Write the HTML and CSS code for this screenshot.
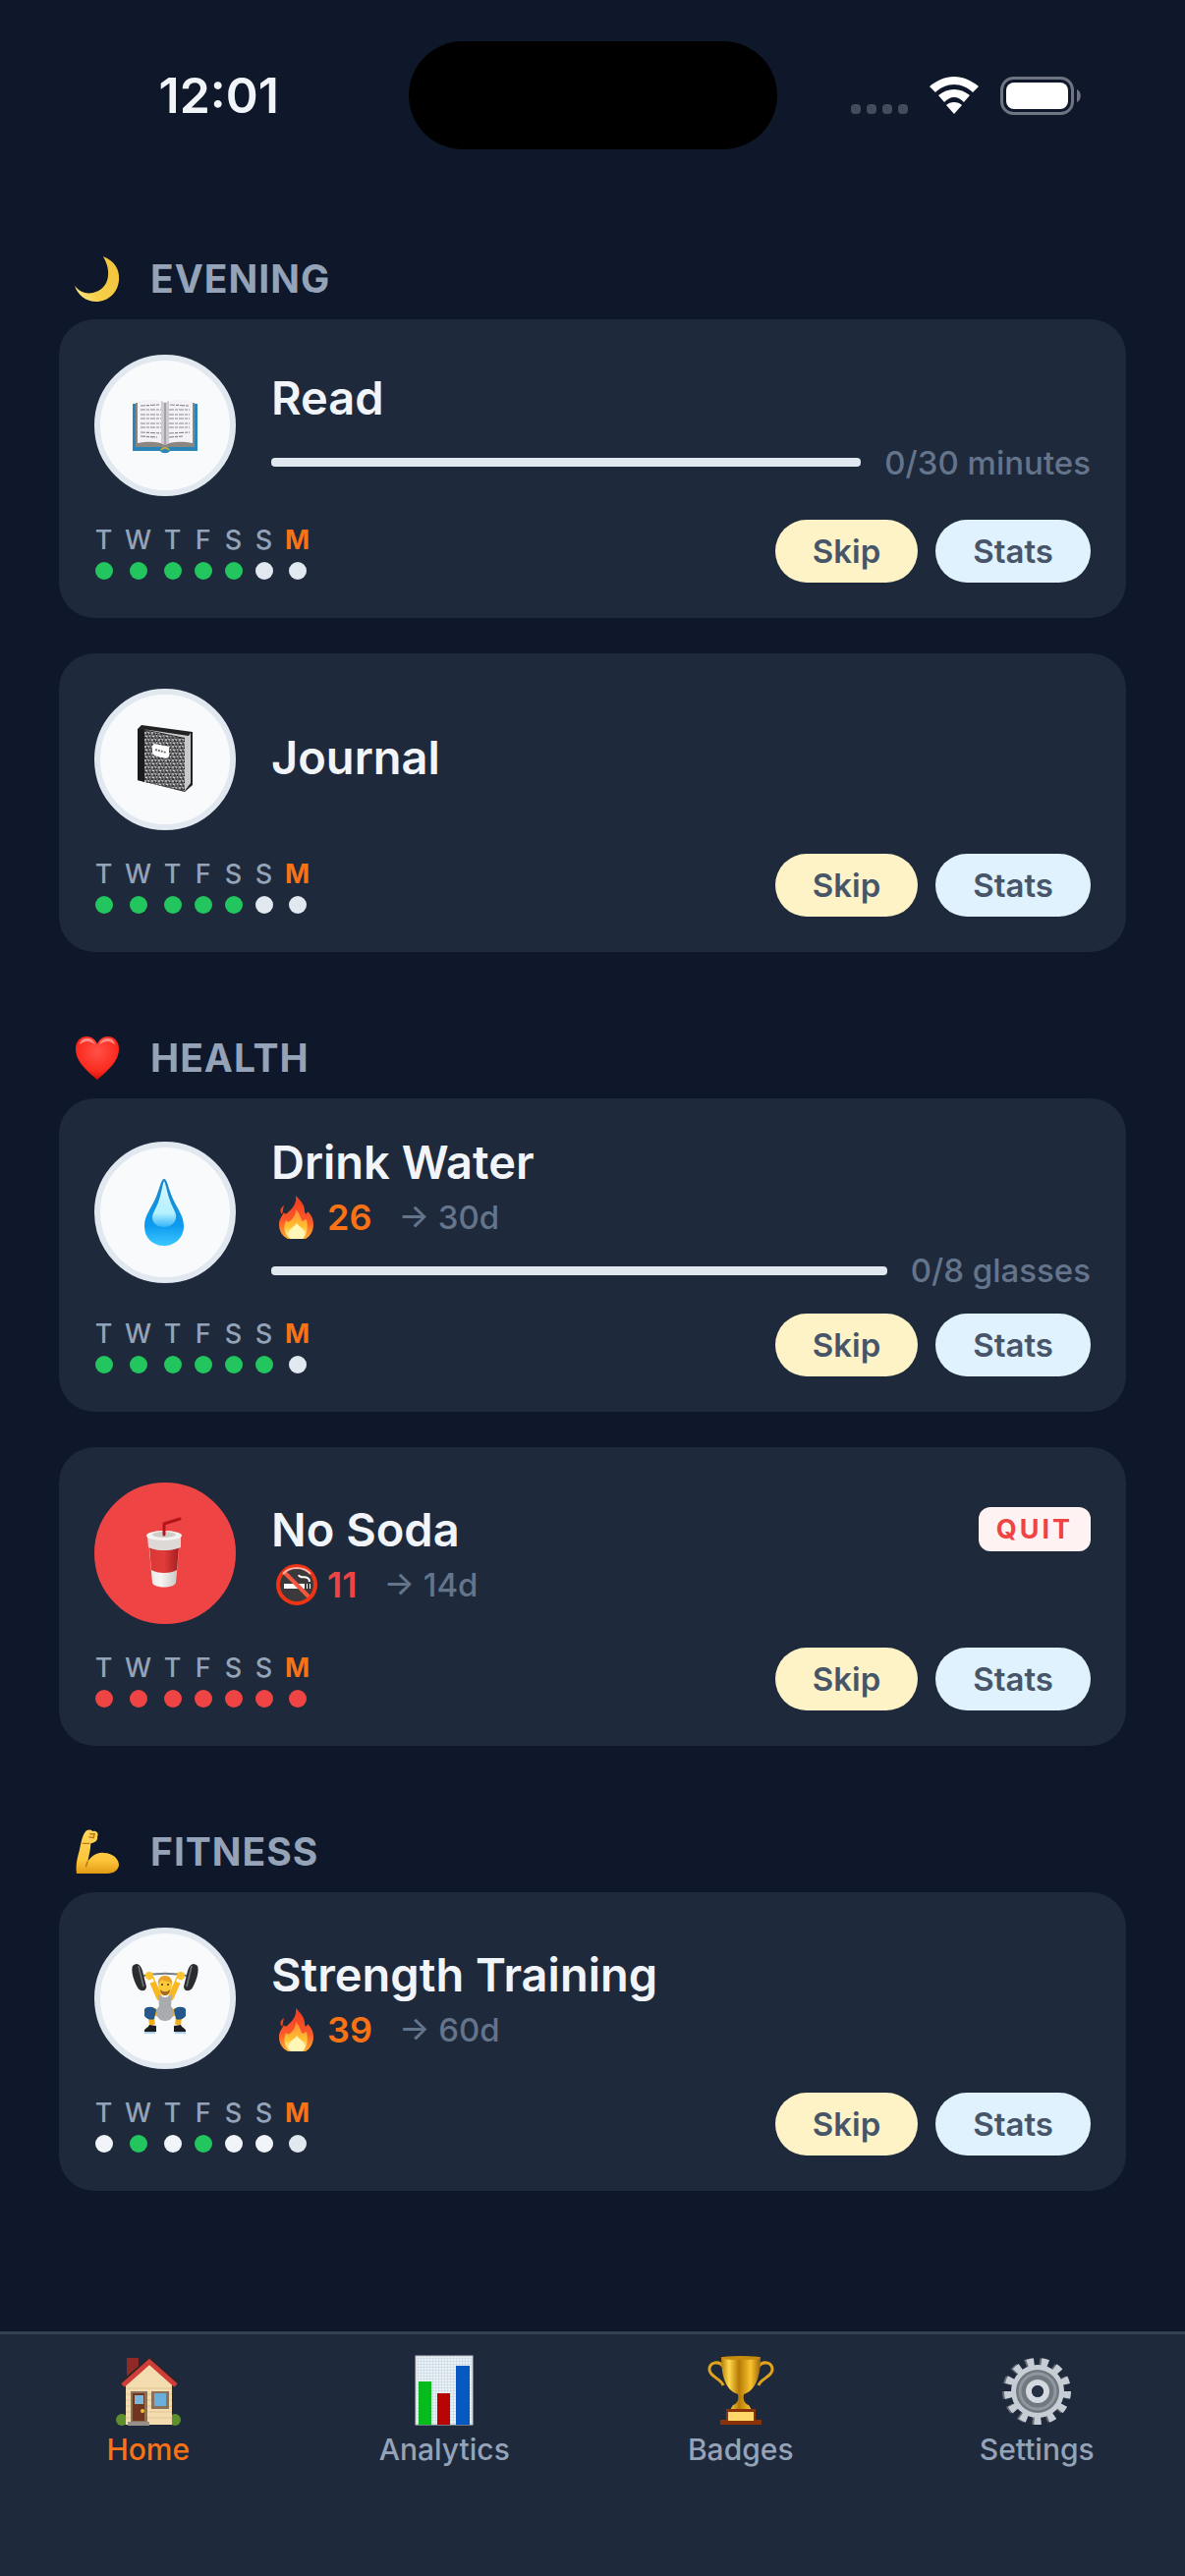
FILE: index.html
```html
<!DOCTYPE html>
<html lang="en">
<head>
  <meta charset="UTF-8">
  <meta name="viewport" content="width=device-width, initial-scale=1.0">
  <title>Habits</title>
  <link rel="stylesheet" href="styles.css">
</head>
<body>

<!-- shared icons -->
<svg class="defs" width="0" height="0" aria-hidden="true">
  <defs>
    <linearGradient id="fireOuter" x1="0" y1="0" x2="0" y2="1">
      <stop offset="0" stop-color="#f0381f"/>
      <stop offset="0.6" stop-color="#fb5a2a"/>
      <stop offset="1" stop-color="#ffb02e"/>
    </linearGradient>
    <linearGradient id="fireInner" x1="0" y1="0" x2="0" y2="1">
      <stop offset="0" stop-color="#ff8a3c"/>
      <stop offset="0.6" stop-color="#ffc22e"/>
      <stop offset="1" stop-color="#fffbd0"/>
    </linearGradient>
    <symbol id="fire" viewBox="0 0 48 44">
      <path fill="url(#fireOuter)" d="M25 0 C29 4 34 9 34 15 C34 18 35 19 36 18 C37 17 37 16 38 17 C41 20 43 24 43 29 C43 36 40 41 35 44 H17 C11 41 8 36 8 29 C8 24 11 21 13 17 C14 19 15 19 17 17 C22 13 26 8 25 0 Z"/>
      <path fill="#f0481f" d="M13 10 C10 12 8 15 11 19 C12 16 12 13 13 10 Z"/>
      <path fill="url(#fireInner)" d="M25 14 C30 19 30 25 32 26 C34 25 35 24 36 24 C38 33 36 40 32 44 H20 C13 40 12 32 15 25 C17 27 18 27 19 26 C23 23 25 19 25 14 Z"/>
      <path fill="#fff6b8" d="M26 28 C28 32 34 33 34 38 C34 41 32 43 31 44 H21 C19 42 18 40 18 38 C18 33 24 32 26 28 Z"/>
    </symbol>
  </defs>
</svg>

<header class="status-bar">
  <div class="time">12:01</div>
  <div class="island"></div>
  <div class="status-icons">
    <div class="signal"><i></i><i></i><i></i><i></i></div>
    <svg class="wifi" viewBox="0 0 50 38">
      <g fill="#fff">
        <path d="M25 0 C34 0 43 4 50 10 L44 16 C39 11 32 8 25 8 C18 8 11 11 6 16 L0 10 C7 4 16 0 25 0 Z"/>
        <path d="M25 13 C31 13 36 15 41 19 L35 26 C32 23 29 21 25 21 C21 21 18 23 15 26 L9 19 C14 15 19 13 25 13 Z"/>
        <path d="M25 26 C28 26 31 27 33 29 L25 38 L17 29 C19 27 22 26 25 26 Z"/>
      </g>
    </svg>
    <svg class="battery" viewBox="0 0 82 39">
      <rect x="1.5" y="1.5" width="72" height="36" rx="12" fill="none" stroke="#6f7482" stroke-width="3"/>
      <rect x="6" y="6" width="63" height="27" rx="8" fill="#fff"/>
      <path d="M78 13 C83 15 83 24 78 26 Z" fill="#6f7482"/>
    </svg>
  </div>
</header>

<main>
  <section>
    <h2>
      <svg class="section-icon" viewBox="0 0 48 48">
        <defs>
          <linearGradient id="moon" x1="1" y1="0" x2="0" y2="1">
            <stop offset="0" stop-color="#f0c23a"/>
            <stop offset="0.7" stop-color="#f7cf49"/>
            <stop offset="1" stop-color="#fff09a"/>
          </linearGradient>
        </defs>
        <path fill="url(#moon)" d="M30 0 C42 4 48 14 47 25 C46 38 36 48 23 48 C12 48 3 41 0 31 C6 39 15 41 24 37 C36 32 40 16 30 0 Z"/>
      </svg>
      <span>EVENING</span>
    </h2>

    <article class="card">
      <div class="card-top">
        <div class="habit-icon">
          <svg viewBox="0 0 84 84">
            <path fill="#2a86b8" d="M9 20 H75 V68 H47 C45 71 39 71 37 68 H9 Z"/>
            <path fill="#8b8780" d="M12 19 H72 V64 H12 Z"/>
            <path fill="#f4f2f6" d="M14 18 C24 15 36 15 42 19 C48 15 60 15 70 18 V60 C60 58 48 58 42 62 C36 58 24 58 14 60 Z"/>
            <path fill="#cfcbd2" d="M38 17 L42 19 L46 17 V60 L42 62 L38 60 Z"/>
            <path stroke="#777" stroke-width="1" d="M42 19 V62"/>
            <path stroke="#86868c" stroke-width="1.2" stroke-dasharray="5 1 3 1" d="M17 22 L36 21 M17 26 L38 26 M17 31 L38 31 M17 35 L38 35 M17 40 L38 40 M17 44 L38 44 M17 49 L38 50 M17 53 L34 54 M47 21 L66 22 M46 26 L67 26 M46 31 L67 31 M46 35 L67 35 M46 40 L67 40 M46 44 L67 44 M46 50 L67 49 M46 54 L60 53"/>
            <path fill="none" stroke="#c8a640" stroke-width="2" d="M38 67 C40 64 44 64 46 67"/>
          </svg>
        </div>
        <div class="info">
          <div class="title-row"><h3>Read</h3></div>
          <div class="progress"><div class="track"></div><span>0/30 minutes</span></div>
        </div>
      </div>
      <div class="card-bottom">
        <div class="week">
          <div class="day"><span>T</span><i class="done"></i></div>
          <div class="day"><span>W</span><i class="done"></i></div>
          <div class="day"><span>T</span><i class="done"></i></div>
          <div class="day"><span>F</span><i class="done"></i></div>
          <div class="day"><span>S</span><i class="done"></i></div>
          <div class="day"><span>S</span><i></i></div>
          <div class="day today"><span>M</span><i></i></div>
        </div>
        <div class="actions">
          <button class="skip">Skip</button>
          <button class="stats">Stats</button>
        </div>
      </div>
    </article>

    <article class="card">
      <div class="card-top">
        <div class="habit-icon">
          <svg viewBox="0 0 84 84">
            <defs>
              <pattern id="speckle" width="7" height="7" patternUnits="userSpaceOnUse">
                <rect width="7" height="7" fill="#66666b"/>
                <path stroke="#f0f0f0" stroke-width="1" d="M0 1 h2 M4 0 v2 M1 4 l2 1 M5 4 h1 M3 6 h1"/>
                <path stroke="#111" stroke-width="1" d="M2 2 h2 M5 2 l1 1 M0 6 h2 M4 5 v2"/>
              </pattern>
            </defs>
            <path fill="#222" d="M18 7 L70 14 V68 L62 75 L14 63 V11 Z"/>
            <path fill="#c9c9c9" d="M19 11 L66 18 L68 15 L68 66 L62 74 V20 Z"/>
            <path fill="url(#speckle)" d="M21 12 L62 21 V74 L21 65 Z"/>
            <path fill="#1b1b1d" d="M14 11 L21 12 V65 L14 63 Z"/>
            <path fill="#fff" d="M31 26 L46 29 V39 L43 41 L31 38 L29 35 V28 Z"/>
            <path stroke="#777" stroke-width="2" stroke-dasharray="2 1" d="M32 32 L43 35"/>
          </svg>
        </div>
        <div class="info">
          <div class="title-row"><h3>Journal</h3></div>
        </div>
      </div>
      <div class="card-bottom">
        <div class="week">
          <div class="day"><span>T</span><i class="done"></i></div>
          <div class="day"><span>W</span><i class="done"></i></div>
          <div class="day"><span>T</span><i class="done"></i></div>
          <div class="day"><span>F</span><i class="done"></i></div>
          <div class="day"><span>S</span><i class="done"></i></div>
          <div class="day"><span>S</span><i></i></div>
          <div class="day today"><span>M</span><i></i></div>
        </div>
        <div class="actions">
          <button class="skip">Skip</button>
          <button class="stats">Stats</button>
        </div>
      </div>
    </article>
  </section>

  <section>
    <h2>
      <svg class="section-icon" viewBox="0 0 48 48">
        <defs>
          <radialGradient id="heart" cx="0.5" cy="0.35" r="0.65">
            <stop offset="0" stop-color="#ff5148"/>
            <stop offset="0.7" stop-color="#fb2b20"/>
            <stop offset="1" stop-color="#d10d05"/>
          </radialGradient>
        </defs>
        <path fill="url(#heart)" d="M24 47 C14 38 1 28 1 14 C1 6 6 1 13 1 C18 1 22 4 24 9 C26 4 30 1 35 1 C42 1 47 6 47 14 C47 28 34 38 24 47 Z"/>
        <path fill="#ffb3ac" opacity="0.7" d="M5 10 C6 5 9 3 13 3 C17 3 20 5 22 10 C17 5 10 5 5 10 Z M26 10 C28 5 31 3 35 3 C39 3 42 5 43 10 C38 5 31 5 26 10 Z"/>
      </svg>
      <span>HEALTH</span>
    </h2>

    <article class="card">
      <div class="card-top">
        <div class="habit-icon">
          <svg viewBox="0 0 84 84">
            <defs>
              <linearGradient id="drop" x1="0" y1="0" x2="0" y2="1">
                <stop offset="0" stop-color="#1b86c8"/>
                <stop offset="0.7" stop-color="#0d9bf0"/>
                <stop offset="1" stop-color="#3cc8ff"/>
              </linearGradient>
              <linearGradient id="dropShine" x1="0" y1="0" x2="0" y2="1">
                <stop offset="0" stop-color="#d8f8ff"/>
                <stop offset="0.7" stop-color="#b4f0ff"/>
                <stop offset="1" stop-color="#35b4f8"/>
              </linearGradient>
            </defs>
            <path fill="url(#drop)" d="M41 8 C44 8 45 16 49 26 C54 38 61 45 61 56 C61 68 52 76 41 76 C29 76 21 68 21 56 C21 45 28 38 33 26 C37 16 38 8 41 8 Z"/>
            <path fill="url(#dropShine)" d="M41 10 C43 14 44 22 47 30 C50 39 54 42 53 48 C52 54 46 57 41 57 C35 57 30 54 29 48 C29 42 33 39 36 29 C39 20 39 14 41 10 Z"/>
          </svg>
        </div>
        <div class="info">
          <div class="title-row"><h3>Drink Water</h3></div>
          <div class="streak">
            <svg class="streak-icon"><use href="#fire"/></svg>
            <b>26</b>
            <span>→ 30d</span>
          </div>
          <div class="progress"><div class="track"></div><span>0/8 glasses</span></div>
        </div>
      </div>
      <div class="card-bottom">
        <div class="week">
          <div class="day"><span>T</span><i class="done"></i></div>
          <div class="day"><span>W</span><i class="done"></i></div>
          <div class="day"><span>T</span><i class="done"></i></div>
          <div class="day"><span>F</span><i class="done"></i></div>
          <div class="day"><span>S</span><i class="done"></i></div>
          <div class="day"><span>S</span><i class="done"></i></div>
          <div class="day today"><span>M</span><i></i></div>
        </div>
        <div class="actions">
          <button class="skip">Skip</button>
          <button class="stats">Stats</button>
        </div>
      </div>
    </article>

    <article class="card">
      <div class="card-top">
        <div class="habit-icon quit">
          <svg viewBox="0 0 84 84">
            <defs>
              <linearGradient id="cup" x1="0" y1="0" x2="1" y2="0">
                <stop offset="0" stop-color="#e9e7e5"/>
                <stop offset="0.4" stop-color="#f6f5f4"/>
                <stop offset="1" stop-color="#c4c1be"/>
              </linearGradient>
              <linearGradient id="sleeve" x1="0" y1="0" x2="1" y2="0">
                <stop offset="0" stop-color="#d93636"/>
                <stop offset="0.5" stop-color="#e03c3a"/>
                <stop offset="1" stop-color="#a51d1f"/>
              </linearGradient>
            </defs>
            <path fill="url(#cup)" d="M25 28 H57 L53 72 C51 78 31 78 29 72 Z"/>
            <path fill="url(#sleeve)" d="M26 36 C34 40 48 40 56 36 L54 59 C48 63 34 63 28 59 Z"/>
            <path fill="#dcd9d6" d="M24 24 H58 V36 C48 40 34 40 25 36 Z"/>
            <ellipse cx="41" cy="24" rx="18" ry="5" fill="#f4f2f0"/>
            <ellipse cx="41" cy="23" rx="12" ry="3" fill="#cfcbc8"/>
            <path fill="none" stroke="#b3151b" stroke-width="3" stroke-linecap="round" stroke-linejoin="round" d="M41 23 V12 L57 7"/>
          </svg>
        </div>
        <div class="info">
          <div class="title-row"><h3>No Soda</h3><div class="badge">QUIT</div></div>
          <div class="streak broken">
            <svg class="streak-icon" viewBox="0 0 48 44">
              <circle cx="26" cy="22" r="20" fill="#3a3a3c"/>
              <path fill="#fff" d="M13 21 H34 V26 H13 Z M36 21 h1 v5 h-1 Z M39 21 h1 v5 h-1 Z"/>
              <path fill="none" stroke="#fff" stroke-width="2" d="M28 12 C29 17 39 11 39 19"/>
              <path stroke="#f4573f" stroke-width="4" d="M13 9 L39 35"/>
              <circle cx="26" cy="22" r="19" fill="none" stroke="#ee3414" stroke-width="4"/>
              <path fill="none" stroke="#ffb0a0" stroke-width="2" d="M12 11 C19 3 33 3 40 11"/>
            </svg>
            <b>11</b>
            <span>→ 14d</span>
          </div>
        </div>
      </div>
      <div class="card-bottom">
        <div class="week">
          <div class="day"><span>T</span><i class="missed"></i></div>
          <div class="day"><span>W</span><i class="missed"></i></div>
          <div class="day"><span>T</span><i class="missed"></i></div>
          <div class="day"><span>F</span><i class="missed"></i></div>
          <div class="day"><span>S</span><i class="missed"></i></div>
          <div class="day"><span>S</span><i class="missed"></i></div>
          <div class="day today"><span>M</span><i class="missed"></i></div>
        </div>
        <div class="actions">
          <button class="skip">Skip</button>
          <button class="stats">Stats</button>
        </div>
      </div>
    </article>
  </section>

  <section>
    <h2>
      <svg class="section-icon" viewBox="0 0 48 48">
        <defs>
          <linearGradient id="arm" x1="0" y1="0" x2="0" y2="1">
            <stop offset="0" stop-color="#ffd65c"/>
            <stop offset="0.7" stop-color="#fdc53a"/>
            <stop offset="1" stop-color="#e09a14"/>
          </linearGradient>
        </defs>
        <path fill="url(#arm)" d="M11 3 C13 0 17 0 19 2 C23 1 26 4 24 8 C25 12 21 14 17 15 C17 22 15 27 14 34 C18 28 24 24 31 25 C41 25 47 32 47 38 C46 44 41 47 33 47 H2 C1 40 2 33 4 26 C6 20 7 8 11 3 Z"/>
        <path fill="none" stroke="#b97811" stroke-width="1.5" d="M16 5 L21 5 L20 9 L15 8 M8 15 L16 15 M14 34 C13 36 12 38 12 40"/>
      </svg>
      <span>FITNESS</span>
    </h2>

    <article class="card">
      <div class="card-top">
        <div class="habit-icon">
          <svg viewBox="0 0 84 84">
            <path fill="none" stroke="#777d84" stroke-width="2" d="M15 20 C32 16 52 16 69 20"/>
            <path fill="#2a2c30" d="M9 9 C13 5 17 7 19 14 L23 30 C23 35 17 36 14 31 C10 24 7 14 9 9 Z M75 9 C71 5 67 7 65 14 L61 30 C61 35 67 36 70 31 C74 24 77 14 75 9 Z"/>
            <path fill="none" stroke="#74777c" stroke-width="1.5" d="M15 9 L20 30 M69 9 L64 30"/>
            <path fill="none" stroke="#f9b81f" stroke-width="6" stroke-linecap="round" d="M27 20 L36 41 M57 20 L48 41"/>
            <circle cx="26" cy="19" r="4" fill="#fcc42c"/>
            <circle cx="58" cy="19" r="4" fill="#fcc42c"/>
            <path stroke="#fff" stroke-width="6" d="M27 23 L28 26 M57 23 L56 26"/>
            <path fill="none" stroke="#f4ae17" stroke-width="6" d="M27 54 L29 69 M57 54 L55 69"/>
            <path fill="none" stroke="#f4ae17" stroke-width="7" d="M27 54 L40 59 M57 54 L44 59"/>
            <path fill="#a9abaf" d="M35 38 C40 42 44 42 49 38 L48 50 C53 55 51 65 42 65 C33 65 31 55 36 50 Z"/>
            <ellipse cx="42" cy="29" rx="7" ry="10" fill="#fdca3c"/>
            <path fill="#e9a324" d="M35 28 C33 16 51 16 49 28 C46 23 42 26 39 23 C38 24 36 25 35 28 Z"/>
            <path fill="#a56a1c" d="M37 33 C40 36 44 36 47 33 C47 41 37 41 37 33 Z"/>
            <path fill="#26578c" d="M21 53 C24 49 32 51 33 54 L31 63 C28 65 23 63 21 60 Z M63 53 C60 49 52 51 51 54 L53 63 C56 65 61 63 63 60 Z"/>
            <path fill="#1c1d20" d="M26 69 L33 70 L33 76 H21 C20 73 25 72 26 69 Z M58 69 L51 70 L51 76 H63 C64 73 59 72 58 69 Z"/>
            <path stroke="#60a5e0" stroke-width="1" d="M21 77 H32 M52 77 H63"/>
            <path fill="none" stroke="#583513" stroke-width="1.5" d="M38 28 h2 M44 28 h2"/>
          </svg>
        </div>
        <div class="info">
          <div class="title-row"><h3>Strength Training</h3></div>
          <div class="streak">
            <svg class="streak-icon"><use href="#fire"/></svg>
            <b>39</b>
            <span>→ 60d</span>
          </div>
        </div>
      </div>
      <div class="card-bottom">
        <div class="week">
          <div class="day"><span>T</span><i class="off"></i></div>
          <div class="day"><span>W</span><i class="done"></i></div>
          <div class="day"><span>T</span><i class="off"></i></div>
          <div class="day"><span>F</span><i class="done"></i></div>
          <div class="day"><span>S</span><i class="off"></i></div>
          <div class="day"><span>S</span><i class="off"></i></div>
          <div class="day today"><span>M</span><i></i></div>
        </div>
        <div class="actions">
          <button class="skip">Skip</button>
          <button class="stats">Stats</button>
        </div>
      </div>
    </article>
  </section>
</main>

<nav class="tab-bar">
  <a href="#home" class="active">
    <svg viewBox="0 0 72 72">
      <path fill="#8f2a26" d="M14 3 H26 V16 L14 27 Z"/>
      <circle cx="9" cy="66" r="6" fill="#5d8f2e"/>
      <circle cx="63" cy="66" r="6" fill="#5d8f2e"/>
      <path fill="#f3dcb0" d="M13 30 L37 8 L60 30 V71 H13 Z"/>
      <path stroke="#dfc593" stroke-width="1" d="M13 34 H60 M13 40 H60 M13 46 H60 M13 52 H60 M13 58 H60 M13 64 H60"/>
      <path fill="none" stroke="#2b2527" stroke-width="3" d="M9 28 L37 4 L65 28"/>
      <path fill="none" stroke="#cf3d38" stroke-width="5" d="M10 31 L37 7 L64 31"/>
      <path fill="#8d7156" d="M18 37 H35 V68 H18 Z"/>
      <path fill="#6f351f" d="M20 39 H32 V67 H20 Z"/>
      <path fill="#79b8dc" d="M22 41 H31 V50 H22 Z"/>
      <circle cx="30" cy="57" r="2" fill="#f1bd38"/>
      <path fill="#8d7156" d="M39 37 H57 V55 H39 Z"/>
      <path fill="#6aaedb" d="M42 39 H54 V52 H42 Z"/>
      <path fill="#96908a" d="M15 68 H37 V72 H15 Z"/>
    </svg>
    <span>Home</span>
  </a>
  <a href="#analytics">
    <svg viewBox="0 0 72 72">
      <defs>
        <pattern id="grid" width="3" height="3" patternUnits="userSpaceOnUse">
          <rect width="3" height="3" fill="#eef1f3"/>
          <path stroke="#b9d3e4" stroke-width="1" fill="none" d="M0 0 H3 M0 0 V3"/>
        </pattern>
      </defs>
      <rect x="7" y="1" width="58" height="70" fill="url(#grid)" stroke="#c5c8cb" stroke-width="1"/>
      <rect x="10" y="27" width="13" height="44" fill="#06bb1b"/>
      <rect x="29" y="39" width="13" height="32" fill="#b90404"/>
      <rect x="48" y="11" width="14" height="60" fill="#0559c0"/>
    </svg>
    <span>Analytics</span>
  </a>
  <a href="#badges">
    <svg viewBox="0 0 72 72">
      <defs>
        <linearGradient id="gold" x1="0" y1="0" x2="1" y2="0">
          <stop offset="0" stop-color="#b87a08"/>
          <stop offset="0.2" stop-color="#ffd94d"/>
          <stop offset="0.45" stop-color="#b67a05"/>
          <stop offset="0.75" stop-color="#f8c22e"/>
          <stop offset="1" stop-color="#9b6706"/>
        </linearGradient>
      </defs>
      <path fill="none" stroke="#e0a41c" stroke-width="3" d="M19 13 C14 5 4 7 4 15 C4 22 16 24 18 31 M53 13 C58 5 68 7 68 15 C68 22 56 24 54 31"/>
      <path fill="url(#gold)" d="M16 2 H56 C56 20 52 36 39 40 C38 45 39 49 44 51 L47 56 H25 L28 51 C33 49 34 45 33 40 C20 36 16 20 16 2 Z"/>
      <ellipse cx="36" cy="3" rx="20" ry="2" fill="#c98c0d"/>
      <path fill="#8c3209" d="M21 55 H51 V66 H57 V71 H15 V66 H21 Z"/>
      <path fill="#ffd869" d="M23 58 H49 V67 H23 Z"/>
    </svg>
    <span>Badges</span>
  </a>
  <a href="#settings">
    <svg viewBox="0 0 72 72">
      <circle cx="35" cy="37" r="30" fill="none" stroke="#686b6e" stroke-width="8" stroke-dasharray="7 7.5"/>
      <circle cx="37" cy="37" r="30" fill="none" stroke="#c7cdd4" stroke-width="8" stroke-dasharray="7 7.5"/>
      <circle cx="37" cy="37" r="27" fill="#c7cdd4"/>
      <circle cx="37" cy="37" r="22" fill="#717980"/>
      <circle cx="37" cy="37" r="18" fill="none" stroke="#90989f" stroke-width="3"/>
      <circle cx="37" cy="37" r="9" fill="#3c444d" stroke="#d3d9df" stroke-width="6"/>
      <circle cx="37" cy="37" r="6" fill="#253044"/>
    </svg>
    <span>Settings</span>
  </a>
</nav>

</body>
</html>
```
FILE: styles.css
```css
* {
    box-sizing: border-box;
}
body {
    margin: 0;
    min-height: 100vh;
    display: flex;
    flex-direction: column;
    background-color: #0f172a;
    color: #f1f5f9;
    font-family: Inter, "Liberation Sans", sans-serif;
}
.defs {
    position: absolute;
}

/* status bar */
.status-bar {
    display: grid;
    grid-template-columns: 1fr 375px 1fr;
    align-items: center;
    padding: 42px 0 24px;
}
.time {
    padding-left: 30px;
    text-align: center;
    font-size: 50px;
    font-weight: 600;
    line-height: 60px;
}
.island {
    height: 110px;
    border-radius: 55px;
    background-color: #000;
}
.status-icons {
    display: flex;
    align-items: center;
    justify-content: flex-end;
    gap: 22px;
    padding-right: 106px;
}
.signal {
    display: flex;
    gap: 6px;
    padding-top: 28px;
}
.signal i {
    width: 10px;
    height: 10px;
    border-radius: 4px;
    background-color: #454b5a;
}
.wifi {
    width: 50px;
    height: 38px;
}
.battery {
    width: 82px;
    height: 39px;
}

/* sections */
main {
    flex: 1;
    padding: 0 60px 36px;
}
section {
    padding-top: 85px;
}
h2 {
    display: flex;
    align-items: center;
    gap: 30px;
    margin: 0 0 18px;
    padding-left: 15px;
    color: #94a3b8;
    font-size: 39px;
    font-weight: 700;
    line-height: 46px;
    letter-spacing: 1px;
}
.section-icon {
    width: 48px;
    height: 46px;
}

/* habit cards */
.card {
    padding: 36px;
    border-radius: 36px;
    background-color: #1e293b;
}
.card + .card {
    margin-top: 36px;
}
.card-top {
    display: flex;
    align-items: center;
    gap: 36px;
    margin-bottom: 24px;
}
.habit-icon {
    display: flex;
    flex: none;
    align-items: center;
    justify-content: center;
    width: 144px;
    height: 144px;
    border: 6px solid #e2e8f0;
    border-radius: 50%;
    background-color: #f8fafc;
}
.habit-icon svg {
    width: 84px;
    height: 84px;
}
.habit-icon.quit {
    border-color: #ef4444;
    background-color: #ef4444;
}
.info {
    display: flex;
    flex: 1;
    flex-direction: column;
}
.title-row {
    display: flex;
    align-items: center;
    justify-content: space-between;
    margin-bottom: 6px;
}
h3 {
    margin: 0;
    font-size: 47px;
    font-weight: 600;
    line-height: 57px;
}
.progress {
    display: flex;
    align-items: center;
    gap: 24px;
    margin-top: 12px;
    color: #64748b;
    font-size: 33px;
    font-weight: 500;
    line-height: 40px;
}
.track {
    flex: 1;
    height: 9px;
    border-radius: 4px;
    background-color: #e2e8f0;
}
.streak {
    display: flex;
    align-items: center;
    color: #64748b;
    font-size: 33px;
    font-weight: 500;
    line-height: 44px;
}
.streak-icon {
    width: 48px;
    height: 44px;
    margin-right: 9px;
}
.streak b {
    margin-right: 27px;
    color: #f97316;
    font-size: 36px;
    font-weight: 600;
}
.streak.broken b {
    color: #ef4444;
}
.badge {
    padding: 6px 18px;
    border-radius: 12px;
    background-color: #fef2f2;
    color: #ef4444;
    font-size: 27px;
    font-weight: 700;
    line-height: 33px;
    letter-spacing: 3px;
}

.card-bottom {
    display: flex;
    align-items: center;
    justify-content: space-between;
}
.week {
    display: flex;
    gap: 12px;
}
.day {
    display: flex;
    flex-direction: column;
    align-items: center;
    gap: 6px;
    min-width: 19px;
    color: #94a3b8;
    font-size: 27px;
    font-weight: 500;
    line-height: 33px;
}
.day i {
    width: 18px;
    height: 18px;
    border-radius: 50%;
    background-color: #e2e8f0;
}
.day .done {
    background-color: #22c55e;
}
.day .missed {
    background-color: #ef4444;
}
.day .off {
    background-color: #f1f5f9;
}
.today {
    color: #f97316;
    font-weight: 700;
}
.actions {
    display: flex;
    gap: 18px;
}
button {
    padding: 12px 38px;
    border: none;
    border-radius: 32px;
    color: #475569;
    font-family: inherit;
    font-size: 33px;
    font-weight: 600;
    line-height: 40px;
    cursor: pointer;
}
.skip {
    background-color: #fef3c7;
}
.stats {
    background-color: #e0f2fe;
}

/* bottom tabs */
.tab-bar {
    display: grid;
    grid-template-columns: repeat(4, 1fr);
    padding: 21px 0 111px;
    border-top: 3px solid #334155;
    background-color: #1e293b;
}
.tab-bar a {
    display: flex;
    flex-direction: column;
    align-items: center;
    gap: 6px;
    color: #94a3b8;
    font-size: 30px;
    font-weight: 500;
    line-height: 36px;
    text-decoration: none;
}
.tab-bar svg {
    width: 72px;
    height: 72px;
}
.tab-bar .active {
    color: #f97316;
}
```
